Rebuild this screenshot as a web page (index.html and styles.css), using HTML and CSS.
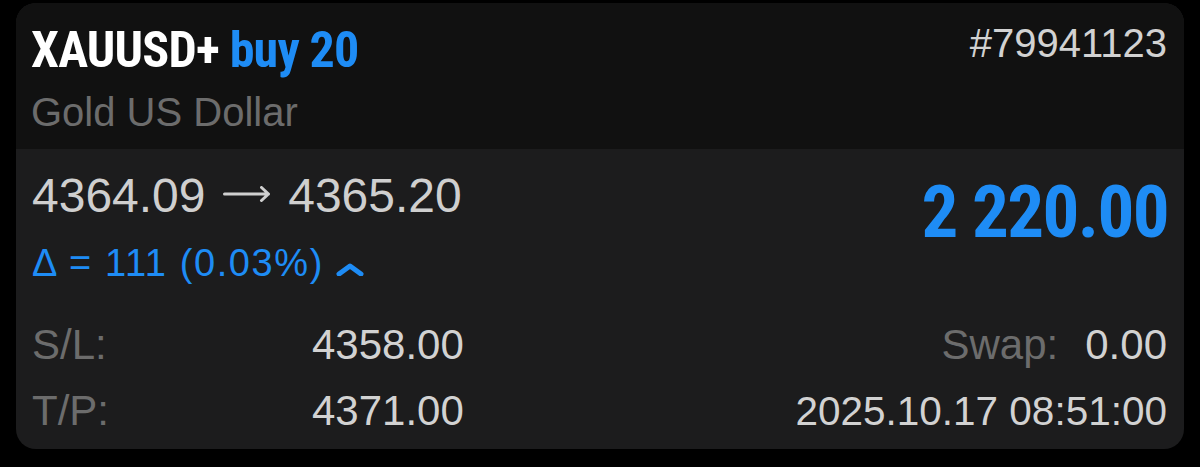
FILE: index.html
```html
<!DOCTYPE html>
<html lang="en">
<head>
    <meta charset="UTF-8">
    <meta name="viewport" content="width=device-width, initial-scale=1.0">
    <title>XAUUSD+ position</title>
    <link rel="stylesheet" href="styles.css">
</head>
<body>

    <div class="card">
        <div class="card-head">
            <div class="head-left">
                <div class="title">XAUUSD+ <span class="side">buy 20</span></div>
                <div class="subtitle">Gold US Dollar</div>
            </div>
            <div class="ticket">#79941123</div>
        </div>

        <div class="card-body">
            <div class="summary">
                <div class="prices">
                    <div class="price-line">4364.09 <svg class="arrow" width="48" height="16" viewBox="0 0 48 16">
                            <path d="M1.5 8 H45.5 M38.5 1.5 L45.5 8 L38.5 14.5" fill="none" stroke="currentColor" stroke-width="3" stroke-linecap="round" stroke-linejoin="round"/>
                        </svg> 4365.20</div>
                    <div class="delta">Δ = 111 (0.03%) <svg class="chevron" width="28" height="14" viewBox="0 0 28 14">
                            <path d="M3 12 L14 4 L25 12" fill="none" stroke="currentColor" stroke-width="5" stroke-linecap="round" stroke-linejoin="round"/>
                        </svg></div>
                </div>
                <div class="profit">2 220.00</div>
            </div>

            <div class="row">
                <span class="label">S/L:</span>
                <span class="value">4358.00</span>
                <span class="row-right"><span class="label">Swap:</span><span class="value">0.00</span></span>
            </div>
            <div class="row">
                <span class="label">T/P:</span>
                <span class="value">4371.00</span>
                <span class="row-right"><span class="value date">2025.10.17 08:51:00</span></span>
            </div>
        </div>
    </div>

</body>
</html>
```

FILE: styles.css
```css
body {
    margin: 0;
    background-color: #000;
    font-family: "Liberation Sans", Arial, sans-serif;
}

.card {
    width: 1168px;
    margin: 3px 16px 0;
    border-radius: 20px;
    overflow: hidden;
    background-color: #1c1c1d;
}

/* En-tête : symbole, sens, ticket */
.card-head {
    display: flex;
    justify-content: space-between;
    align-items: flex-start;
    padding: 20px 17px 17px 15px;
    background-color: #111111;
}

.title {
    font-family: Roboto, sans-serif;
    font-stretch: 75%;
    font-weight: bold;
    font-size: 50px;
    line-height: 54px;
    letter-spacing: -0.8px;
    color: #fff;
}

.side {
    color: #1e8cf5;
}

.subtitle {
    margin-top: 15px;
    font-size: 40px;
    line-height: 40px;
    color: #6c6c6c;
}

.ticket {
    font-size: 40px;
    line-height: 40px;
    color: #d2d2d2;
}

/* Corps */
.card-body {
    padding: 23px 17px 5px 16px;
}

.summary {
    display: flex;
    justify-content: space-between;
    align-items: flex-start;
}

.price-line {
    font-size: 48px;
    line-height: 48px;
    color: #cfcfcf;
}

.arrow {
    margin: 0 4px;
    vertical-align: 10px;
}

.delta {
    margin-top: 25px;
    font-size: 38px;
    line-height: 36px;
    letter-spacing: 1.6px;
    color: #1e8cf5;
}

.chevron {
    vertical-align: baseline;
}

.profit {
    margin-top: 4px;
    margin-right: -1px;
    font-family: Roboto, sans-serif;
    font-stretch: 75%;
    font-weight: bold;
    font-size: 73px;
    line-height: 72px;
    letter-spacing: -1.6px;
    color: #1e8cf5;
}

.row {
    display: flex;
    align-items: baseline;
    font-size: 42px;
    line-height: 66px;
}

.summary + .row {
    margin-top: 31px;
}

.row > .label {
    width: 280px;
}

.label {
    color: #6c6c6c;
}

.value {
    color: #d2d2d2;
}

.row-right {
    margin-left: auto;
}

.row-right .label {
    margin-right: 27px;
}

.date {
    font-size: 40.5px;
}
```
